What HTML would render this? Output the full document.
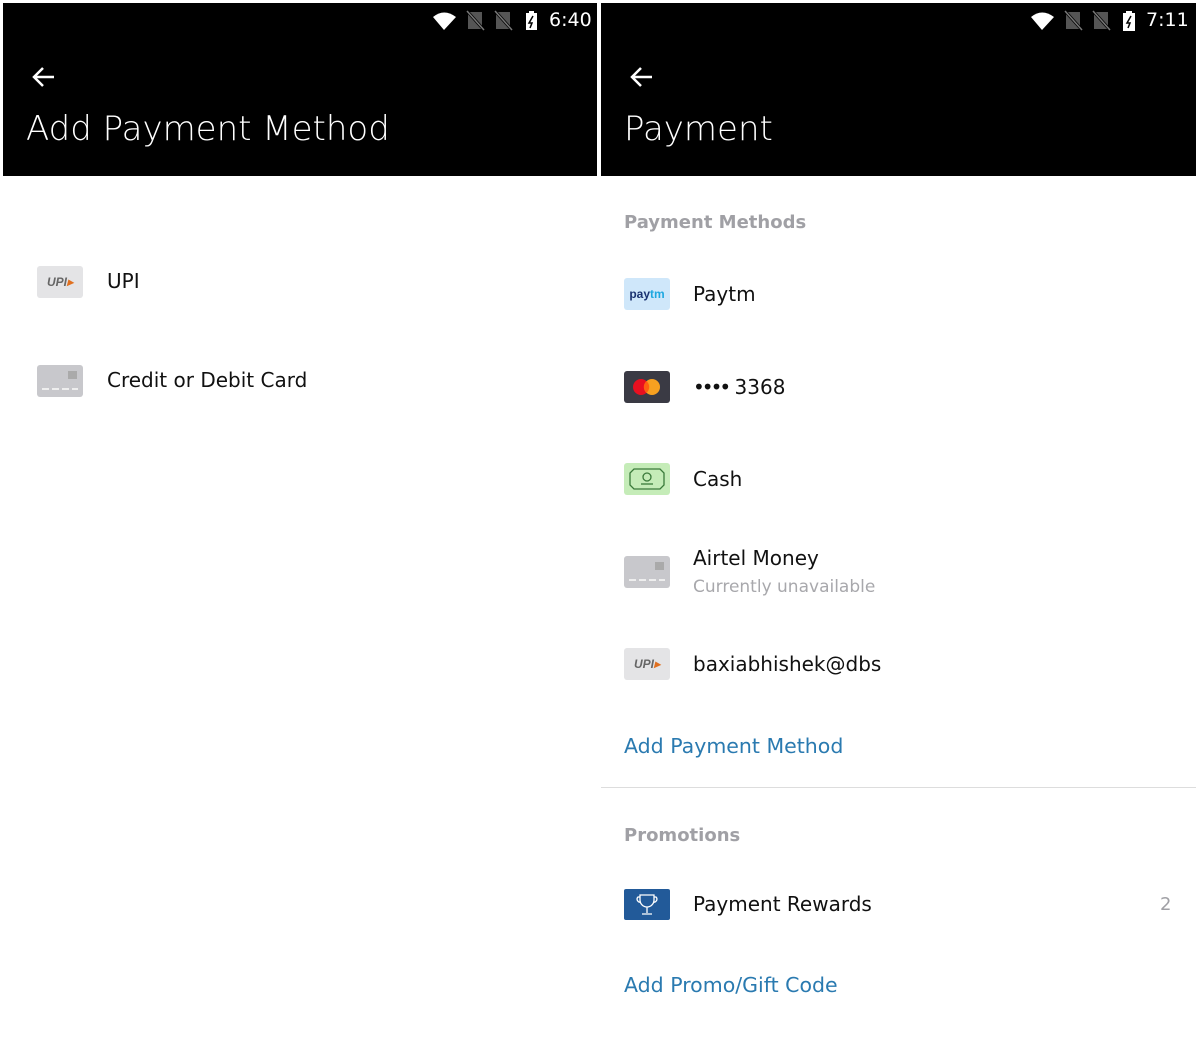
<!DOCTYPE html>
<html><head><meta charset="utf-8"><style>
body{margin:0;width:1199px;height:1064px;background:#fff;position:relative;overflow:hidden;font-family:"DejaVu Sans","Liberation Sans",sans-serif;}
.a{position:absolute;}
.hdr{background:#000;top:3px;height:173px;}
.t{color:#fff;font-size:34px;font-weight:300;}
.st{color:#fff;font-size:19px;}
.it{font-size:20px;color:#111;}
.sec{font-size:18px;color:#a0a0a5;font-weight:bold;}
.lnk{font-size:20.5px;color:#2a7ab0;}
.ic{width:46px;height:32px;border-radius:3px;}
</style></head><body>
<div class="a hdr" style="left:3px;width:594px"></div>
<div class="a hdr" style="left:601px;width:595px"></div>

<svg class="a" style="left:430px;top:8px" width="120" height="26" viewBox="0 0 120 26">
<path d="M3 9 Q14 0 26 9 L14 22 Z" fill="#fff"/>
<rect x="38" y="4" width="14" height="17" fill="#555"/><line x1="37" y1="3" x2="54" y2="22" stroke="#000" stroke-width="3"/><line x1="37" y1="3" x2="54" y2="22" stroke="#777" stroke-width="1.5"/>
<rect x="66" y="4" width="14" height="17" fill="#555"/><line x1="65" y1="3" x2="82" y2="22" stroke="#000" stroke-width="3"/><line x1="65" y1="3" x2="82" y2="22" stroke="#777" stroke-width="1.5"/>
<rect x="96" y="5" width="11" height="17" fill="#fff"/><rect x="99" y="3" width="5" height="3" fill="#fff"/><path d="M103 8 L99 15 L102 15 L100 20" stroke="#000" stroke-width="1.5" fill="none"/>
</svg>
<div class="a st" style="left:549px;top:9px">6:40</div>
<svg class="a" style="left:1028px;top:8px" width="120" height="26" viewBox="0 0 120 26">
<path d="M3 9 Q14 0 26 9 L14 22 Z" fill="#fff"/>
<rect x="38" y="4" width="14" height="17" fill="#555"/><line x1="37" y1="3" x2="54" y2="22" stroke="#000" stroke-width="3"/><line x1="37" y1="3" x2="54" y2="22" stroke="#777" stroke-width="1.5"/>
<rect x="66" y="4" width="14" height="17" fill="#555"/><line x1="65" y1="3" x2="82" y2="22" stroke="#000" stroke-width="3"/><line x1="65" y1="3" x2="82" y2="22" stroke="#777" stroke-width="1.5"/>
<rect x="95" y="5" width="12" height="18" fill="#fff"/><rect x="98" y="3" width="6" height="3" fill="#fff"/><path d="M103 8 L99 15 L102 15 L100 20" stroke="#000" stroke-width="1.5" fill="none"/>
</svg>
<div class="a st" style="left:1146px;top:9px">7:11</div>

<svg class="a" style="left:30px;top:65px" width="26" height="24" viewBox="0 0 26 24"><path d="M24 12H4M13 3L4 12L13 21" stroke="#fff" stroke-width="2.5" fill="none"/></svg>
<svg class="a" style="left:628px;top:65px" width="26" height="24" viewBox="0 0 26 24"><path d="M24 12H4M13 3L4 12L13 21" stroke="#fff" stroke-width="2.5" fill="none"/></svg>
<div class="a t" style="left:26px;top:109px">Add Payment Method</div>
<div class="a t" style="left:624px;top:109px">Payment</div>

<div class="a ic" style="left:37px;top:266px;background:#e4e4e6;font:italic bold 12px 'Liberation Sans',sans-serif;color:#666;text-align:center;line-height:32px">UPI<span style="color:#e07020">▸</span></div>
<div class="a it" style="left:107px;top:269px">UPI</div>
<svg class="a" style="left:37px;top:365px" width="46" height="32"><rect width="46" height="32" rx="3" fill="#c8c8cc"/><rect x="31" y="6" width="9" height="8" fill="#aaa"/><path d="M5 24h7M15 24h7M25 24h7M35 24h6" stroke="#eee" stroke-width="2"/></svg>
<div class="a it" style="left:107px;top:368px">Credit or Debit Card</div>

<div class="a sec" style="left:624px;top:212px">Payment Methods</div>
<div class="a ic" style="left:624px;top:278px;background:#cfe7fa;font:bold 12px 'Liberation Sans',sans-serif;color:#1a3270;text-align:center;line-height:32px">pay<span style="color:#1fa8e0">tm</span></div>
<div class="a it" style="left:693px;top:282px">Paytm</div>
<svg class="a" style="left:624px;top:371px" width="46" height="32"><rect width="46" height="32" rx="3" fill="#3a3a44"/><circle cx="17" cy="16" r="8" fill="#e81020"/><circle cx="28" cy="16" r="8" fill="#f7a020"/><path d="M22.5 10 a8 8 0 0 1 0 12 a8 8 0 0 1 0-12z" fill="#ff6010"/></svg>
<div class="a it" style="left:693px;top:375px"><span style="letter-spacing:-3px">••••</span> 3368</div>
<svg class="a" style="left:624px;top:463px" width="46" height="32"><rect width="46" height="32" rx="3" fill="#c5ecb8"/><path d="M10 6h26l4 4v12l-4 4H10l-4-4V10z" fill="none" stroke="#3a7a3a" stroke-width="1.3"/><circle cx="23" cy="14" r="4" fill="none" stroke="#3a7a3a" stroke-width="1.3"/><path d="M17 21h12" stroke="#3a7a3a" stroke-width="1.3"/></svg>
<div class="a it" style="left:693px;top:467px">Cash</div>
<svg class="a" style="left:624px;top:556px" width="46" height="32"><rect width="46" height="32" rx="3" fill="#c8c8cc"/><rect x="31" y="6" width="9" height="8" fill="#aaa"/><path d="M5 24h7M15 24h7M25 24h7M35 24h6" stroke="#eee" stroke-width="2"/></svg>
<div class="a it" style="left:693px;top:546px">Airtel Money</div>
<div class="a" style="left:693px;top:577px;font-size:17px;color:#a8a8ac">Currently unavailable</div>
<div class="a ic" style="left:624px;top:648px;background:#e4e4e6;font:italic bold 12px 'Liberation Sans',sans-serif;color:#666;text-align:center;line-height:32px">UPI<span style="color:#e07020">▸</span></div>
<div class="a it" style="left:693px;top:652px">baxiabhishek@dbs</div>
<div class="a lnk" style="left:624px;top:734px">Add Payment Method</div>
<div class="a" style="left:601px;top:787px;width:595px;height:1px;background:#ddd"></div>
<div class="a sec" style="left:624px;top:825px">Promotions</div>
<svg class="a" style="left:624px;top:889px" width="46" height="31"><rect width="46" height="31" rx="2" fill="#225a99"/><path d="M16 6h14v5a7 7 0 0 1-14 0z M23 18v6 M18 25h10 M16 8h-2a3 3 0 0 0 3 5 M30 8h2a3 3 0 0 1-3 5" fill="none" stroke="#fff" stroke-width="1.3"/></svg>
<div class="a it" style="left:693px;top:892px">Payment Rewards</div>
<div class="a" style="left:1160px;top:894px;font-size:18px;color:#a0a0a5">2</div>
<div class="a lnk" style="left:624px;top:973px">Add Promo/Gift Code</div>
</body></html>
